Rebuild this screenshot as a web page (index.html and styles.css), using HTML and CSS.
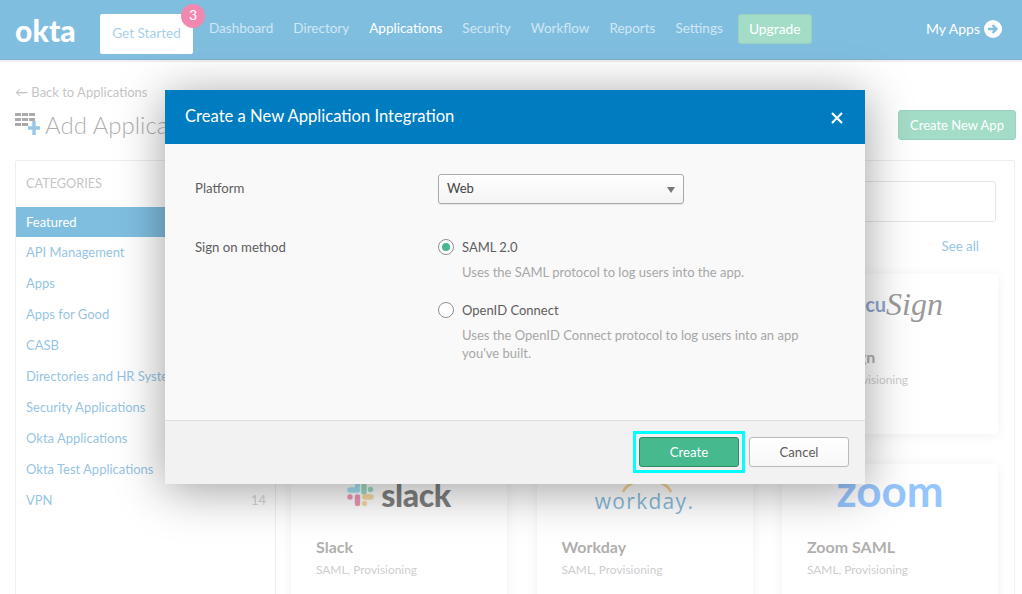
FILE: index.html
```html
<!DOCTYPE html>
<html lang="en">
<head>
<meta charset="utf-8">
<title>Create a New Application Integration</title>
<link rel="stylesheet" href="styles.css">
</head>
<body>
<header class="topbar">
  <span class="logo">okta</span>
  <a class="start">Get Started<span class="badge">3</span></a>
  <nav class="nav">
    <a>Dashboard</a><a>Directory</a><a class="on">Applications</a><a>Security</a><a>Workflow</a><a>Reports</a><a>Settings</a>
  </nav>
  <a class="upgrade">Upgrade</a>
  <a class="myapps">My Apps
    <svg class="go" width="18" height="18" viewBox="0 0 18 18"><circle cx="9" cy="9" r="9" fill="#fff"/><path d="M4 9h8M8.5 5l4 4-4 4" fill="none" stroke="#007dc1" stroke-width="2.4"/></svg>
  </a>
</header>

<main class="page">
  <a class="back">&#8592; Back to Applications</a>
  <div class="titlebar">
    <h1 class="title">
      <svg class="gridicon" width="26" height="23" viewBox="0 0 26 23">
        <g fill="#555"><rect x="0" y="0" width="6" height="3"/><rect x="7" y="0" width="6" height="3"/><rect x="14" y="0" width="6" height="3"/><rect x="0" y="5" width="6" height="3"/><rect x="7" y="5" width="6" height="3"/><rect x="14" y="5" width="6" height="3"/><rect x="0" y="10" width="6" height="3"/><rect x="7" y="10" width="6" height="3"/></g>
        <path d="M19 8v14M13 15h12" stroke="#2f8fd0" stroke-width="3.4"/>
      </svg>
      Add Application
    </h1>
    <a class="btn-new">Create New App</a>
  </div>
  <section class="panel">
    <aside class="side">
      <h2 class="side-head">CATEGORIES</h2>
      <ul class="cats">
        <li class="cat active">Featured</li>
        <li class="cat">API Management</li>
        <li class="cat">Apps</li>
        <li class="cat">Apps for Good</li>
        <li class="cat">CASB</li>
        <li class="cat">Directories and HR Systems</li>
        <li class="cat">Security Applications</li>
        <li class="cat">Okta Applications</li>
        <li class="cat">Okta Test Applications</li>
        <li class="cat">VPN<span class="count">14</span></li>
      </ul>
    </aside>
    <div class="content">
      <div class="search"></div>
      <div class="seeall"><a>See all</a></div>
      <div class="cards">
        <article class="card"></article>
        <article class="card"></article>
        <article class="card">
          <div class="art docu"><b>Docu</b><i>Sign</i></div>
          <h3>DocuSign</h3><p>SAML, Provisioning</p>
        </article>
        <article class="card">
          <div class="art art-slack">
            <svg class="slackmark" width="27" height="24" viewBox="0 0 27 24" fill="none" stroke-width="5.4" stroke-linecap="round">
              <path d="M3 7h7.5M10.5 2.7h.01" stroke="#36c5f0"/>
              <path d="M17 3v6M23.5 6.5h.01" stroke="#2eb67d"/>
              <path d="M18 14h6M17.5 20.5h.01" stroke="#ecb22e"/>
              <path d="M10.5 14v6.5M3 14h.01" stroke="#e01e5a"/>
            </svg>
            <span class="slack">slack</span>
          </div>
          <h3>Slack</h3><p>SAML, Provisioning</p>
        </article>
        <article class="card">
          <div class="art wd">
            <svg class="wdarc" width="54" height="14" viewBox="0 0 54 14"><path d="M3 13C10-3 44-3 51 13" fill="none" stroke="#f5a623" stroke-width="2.6"/></svg>
            <span class="workday">workday.</span>
          </div>
          <h3>Workday</h3><p>SAML, Provisioning</p>
        </article>
        <article class="card">
          <div class="art"><span class="zoomlogo">zoom</span></div>
          <h3>Zoom SAML</h3><p>SAML, Provisioning</p>
        </article>
      </div>
    </div>
  </section>
</main>

<div class="veil"></div>

<div class="modal">
  <div class="m-head">
    <h2>Create a New Application Integration</h2>
    <svg class="close" width="12" height="12" viewBox="0 0 12 12"><path d="M1 1l10 10M11 1L1 11" stroke="#fff" stroke-width="2.2"/></svg>
  </div>
  <div class="m-body">
    <div class="row">
      <label class="lbl lbl-top">Platform</label>
      <div class="select">Web<span class="caret"></span></div>
    </div>
    <div class="row row-sign">
      <label class="lbl">Sign on method</label>
      <div class="opts">
        <div class="opt">
          <span class="radio checked"></span>
          <div><div class="opt-name">SAML 2.0</div><p class="opt-desc">Uses the SAML protocol to log users into the app.</p></div>
        </div>
        <div class="opt">
          <span class="radio"></span>
          <div><div class="opt-name">OpenID Connect</div><p class="opt-desc">Uses the OpenID Connect protocol to log users into an app you've built.</p></div>
        </div>
      </div>
    </div>
  </div>
  <div class="m-foot">
    <a class="btn create">Create</a>
    <a class="btn cancel">Cancel</a>
  </div>
</div>
</body>
</html>
```
FILE: styles.css
```css
* { box-sizing: border-box; }
html, body { margin: 0; height: 594px; overflow: hidden; }
body { font-family: Lato, "Open Sans", "Liberation Sans", sans-serif; font-size: 14px; color: #5e5e5e; background: #fff; position: relative; }
h1, h2, h3, p, ul { margin: 0; padding: 0; font-weight: normal; }
ul { list-style: none; }

.topbar { height: 60px; background: #007dc1; border-bottom: 1px solid #00609a; display: flex; align-items: flex-start; padding-left: 15px; box-shadow: 0 2px 0 #dcdcdc; }
.logo { font-size: 30px; font-weight: 900; color: #fff; line-height: 60px; width: 85px; letter-spacing: .1px; }
.start { position: relative; width: 93px; height: 40px; margin-top: 14px; background: #fff; border-radius: 2px; color: #4a9fd6; text-align: center; line-height: 39px; font-size: 13.6px; }
.badge { position: absolute; left: 81px; top: -10px; width: 24px; height: 24px; border-radius: 50%; background: #e0115f; color: #fff; line-height: 22px; font-size: 14px; }
.nav { display: flex; gap: 20px; margin-left: 16px; line-height: 57px; color: #fff; font-size: 13.5px; }
.nav a { opacity: .62; }
.nav a.on { opacity: 1; }
.upgrade { margin: 14px 0 0 15px; width: 74px; height: 30px; background: #46b98f; border: 1px solid #3aa37d; border-radius: 3px; color: #fff; text-align: center; line-height: 28px; font-size: 13.8px; }
.myapps { margin-left: auto; width: 96px; display: flex; gap: 4px; align-items: center; height: 57px; color: #fff; white-space: nowrap; }

.page { padding: 23px 6px 0 15px; }
.back { display: block; height: 22px; color: #888; font-size: 13px; line-height: 18px; }
.titlebar { display: flex; justify-content: space-between; align-items: flex-start; height: 55px; padding-top: 3px; }
.title { font-size: 24px; color: #5e5e5e; font-weight: 300; display: flex; align-items: center; gap: 4px; height: 30px; margin-top: 1px; }
.gridicon { flex: none; }
.btn-new { width: 118px; height: 30px; margin-top: 2px; background: #46b98f; border: 1px solid #3aa37d; border-radius: 3px; color: #fff; text-align: center; line-height: 28px; font-size: 13px; }

.panel { display: flex; width: 1000px; height: 434px; overflow: hidden; border: 1px solid #ddd; border-bottom: 0; border-radius: 3px 3px 0 0; }
.side { width: 260px; flex: none; border-right: 1px solid #ddd; padding-top: 14px; }
.side-head { font-size: 12.7px; color: #888; padding-left: 10px; height: 32px; line-height: 17px; }
.cat { height: 31px; line-height: 30px; padding: 0 9px 0 10px; color: #2a86c6; font-size: 13px; display: flex; justify-content: space-between; white-space: nowrap; overflow: hidden; }
.cat.active { height: 30px; background: #007dc1; color: #fff; }
.count { color: #aaa; }
.content { flex: 1; padding: 20px 18px 0 15px; min-width: 0; }
.search { height: 41px; border: 1px solid #ccc; border-radius: 3px; }
.seeall { text-align: right; height: 52px; padding: 16px 17px 0 0; color: #2a86c6; font-size: 13.3px; }
.cards { display: grid; grid-template-columns: repeat(3, 216px); grid-auto-rows: 160px; gap: 30px 29.5px; }
.card { background: #fff; border-radius: 3px; box-shadow: 0 1px 12px rgba(0,0,0,.12); padding: 6px 25px 0; }
.card h3 { font-size: 16px; font-weight: 700; color: #5e5e5e; line-height: 20px; margin-top: 27px; }
.card p { font-size: 11.9px; color: #999; line-height: 16px; margin-top: 5px; }
.art { height: 40px; display: flex; justify-content: center; align-items: center; gap: 6px; position: relative; }
.art-slack { padding-top: 10px; gap: 7px; }
.slack { font-size: 32px; font-weight: 900; color: #000; letter-spacing: -.4px; line-height: 36px; }
.slackmark { flex: none; opacity: .9; }
.wd { flex-direction: column; gap: 0; padding-top: 8px; }
.wdarc { position: absolute; top: 9px; left: 58px; }
.workday { font-family: "Open Sans", sans-serif; font-size: 21px; color: #0875b5; letter-spacing: 1.3px; line-height: 26px; margin-top: 14px; }
.zoomlogo { font-family: Lato, sans-serif; font-size: 44px; font-weight: 700; color: #2d8cff; line-height: 40px; }
.docu { justify-content: flex-end; gap: 0; padding-top: 8px; margin-right: 30px; }
.docu b { font-size: 20px; color: #1c4f9c; }
.docu i { font-family: "Liberation Serif", serif; font-size: 32px; color: #333; }

.veil { position: absolute; inset: 0; background: rgba(255,255,255,.5); }

.modal { position: absolute; left: 165px; top: 90px; width: 700px; height: 394px; display: flex; flex-direction: column; background: #f9f9f9; box-shadow: 0 6px 45px rgba(0,0,0,.38); }
.m-head { height: 54px; flex: none; background: #007cc0; display: flex; justify-content: space-between; align-items: center; padding: 0 22px 2px 20px; }
.m-head h2 { font-size: 16.6px; color: #fff; }
.close { margin-top: 4px; }
.m-body { flex: 1; padding: 30px 30px 0; }
.row { display: grid; grid-template-columns: 243px 1fr; }
.lbl { font-size: 13.2px; color: #5e5e5e; line-height: 18px; }
.lbl-top { padding-top: 5px; }
.row-sign { margin-top: 34px; }
.select { position: relative; width: 246px; height: 30px; border: 1px solid #aaa; border-radius: 3px; background: linear-gradient(#fff, #f4f4f4); box-shadow: 0 1px 1px rgba(0,0,0,.08); padding-left: 8px; line-height: 27px; font-size: 13px; color: #444; }
.caret { position: absolute; right: 8px; top: 12px; border-left: 4px solid transparent; border-right: 4px solid transparent; border-top: 6px solid #777; }
.opts { display: flex; flex-direction: column; gap: 20px; }
.opt { display: flex; gap: 8px; }
.radio { flex: none; width: 16px; height: 16px; margin-top: 1px; border: 1px solid #8f8f8f; border-radius: 50%; background: #fff; position: relative; }
.radio.checked::after { content: ""; position: absolute; left: 3px; top: 3px; width: 8px; height: 8px; border-radius: 50%; background: #46b98f; }
.opt-name { font-size: 13px; line-height: 18px; color: #5e5e5e; }
.opt-desc { font-size: 13px; line-height: 18px; color: #a7a7a7; margin-top: 7px; max-width: 350px; }

.m-foot { height: 64px; flex: none; background: #f2f2f2; border-top: 1px solid #ddd; display: flex; justify-content: flex-end; gap: 10px; padding: 16px 16px 0 0; }
.btn { width: 100px; height: 30px; border-radius: 3px; text-align: center; line-height: 28px; font-size: 13.2px; }
.create { position: relative; background: #46b98f; border: 1px solid #2f8a6a; color: #fff; }
.create::before { content: ""; position: absolute; inset: -7px; border: 3px solid #00ffff; }
.cancel { background: linear-gradient(#fff, #f7f7f7); border: 1px solid #bbb; color: #5e5e5e; }
```
